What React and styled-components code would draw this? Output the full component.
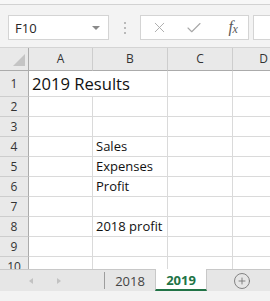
import React from "react";
import styled, { createGlobalStyle } from "styled-components";
import { X, Check, CirclePlus } from "lucide-react";

const GlobalStyle = createGlobalStyle`
  html, body {
    margin: 0;
    padding: 0;
    background: #f3f3f3;
  }
  * {
    box-sizing: border-box;
  }
`;

const Window = styled.div`
  width: 270px;
  height: 301px;
  overflow: hidden;
  display: flex;
  flex-direction: column;
  background: #f3f3f3;
  font-family: "Open Sans", "Liberation Sans", sans-serif;
  color: #222;
`;

const TopEdge = styled.div`
  height: 5px;
  flex: none;
  background: #f7f7f7;
  border-bottom: 1px solid #d2d2d2;
`;

const FormulaBar = styled.div`
  height: 42px;
  flex: none;
  display: flex;
  align-items: flex-start;
  padding: 10px 0 0 8px;
`;

const NameBox = styled.div`
  width: 101px;
  height: 25px;
  background: #fff;
  border: 1px solid #d4d4d4;
  display: flex;
  align-items: center;
  justify-content: space-between;
  padding: 0 8px 0 6px;
  font-size: 13px;
  color: #262626;
`;

const Caret = styled.span`
  width: 0;
  height: 0;
  border-left: 4px solid transparent;
  border-right: 4px solid transparent;
  border-top: 4px solid #8a8a8a;
`;

const Grip = styled.div`
  width: 31px;
  height: 25px;
  display: flex;
  flex-direction: column;
  align-items: center;
  justify-content: center;
  gap: 3px;

  span {
    width: 2px;
    height: 2px;
    background: #b9b9b9;
  }
`;

const FuncBox = styled.div`
  width: 109px;
  height: 25px;
  background: #fff;
  border: 1px solid #d4d4d4;
  display: flex;
  align-items: center;
  padding-left: 10px;
  color: #a8a8a8;
`;

const FuncButton = styled.span`
  display: flex;
  align-items: center;
  justify-content: center;
  width: ${(p) => p.$w}px;
`;

const FxLabel = styled.span`
  font-family: "Liberation Serif", "DejaVu Serif", serif;
  font-style: italic;
  font-size: 16px;
  color: #5a5a5a;
  letter-spacing: -0.5px;

  sub {
    font-size: 12px;
    vertical-align: -1px;
  }
`;

const FormulaInput = styled.div`
  flex: 1;
  height: 25px;
  margin-left: 4px;
  background: #fff;
  border: 1px solid #d4d4d4;
  border-right: none;
`;

const Sheet = styled.div`
  height: 222px;
  flex: none;
  overflow: hidden;
  background: #fff;
  border-top: 1px solid #d4d4d4;
  display: grid;
  grid-template-columns: 29px 64px 75px 65px 62px;
  grid-template-rows: 23px 26px repeat(9, 20px);
`;

const Corner = styled.div`
  background: #e9e9e9;
  border-right: 1px solid #ababab;
  border-bottom: 1px solid #ababab;
  display: flex;
  align-items: flex-end;
  justify-content: flex-end;
  padding: 0 3px 4px 0;

  span {
    width: 0;
    height: 0;
    border-left: 12px solid transparent;
    border-bottom: 12px solid #c4c4c4;
  }
`;

const ColHead = styled.div`
  background: #e9e9e9;
  border-right: 1px solid #cdcdcd;
  border-bottom: 1px solid #ababab;
  text-align: center;
  font-size: 12px;
  line-height: 22px;
  color: #333;
`;

const RowHead = styled.div`
  background: #e9e9e9;
  border-right: 1px solid #ababab;
  border-bottom: 1px solid #cdcdcd;
  text-align: center;
  font-size: 12px;
  line-height: ${(p) => (p.$tall ? 25 : 19)}px;
  color: #333;
`;

const Cell = styled.div`
  border-right: ${(p) => (p.$flow ? "none" : "1px solid #dadada")};
  border-bottom: 1px solid #dadada;
  padding-left: 3px;
  white-space: nowrap;
  overflow: visible;
  position: relative;
  z-index: ${(p) => (p.$text ? 1 : 0)};
  font-size: ${(p) => (p.$big ? 16.6 : 13)}px;
  line-height: ${(p) => (p.$tall ? 25 : 19)}px;
  color: #111;
`;

const TabBar = styled.div`
  height: 22px;
  flex: none;
  display: flex;
  align-items: stretch;
  background: #e6e6e6;
  border-top: 1px solid #c8c8c8;
`;

const NavArea = styled.div`
  width: 104px;
  display: flex;
  align-items: center;
  padding-left: 29px;
  gap: 24px;
`;

const NavArrow = styled.span`
  width: 0;
  height: 0;
  border-top: 3px solid transparent;
  border-bottom: 3px solid transparent;
  ${(p) =>
    p.$dir === "left"
      ? "border-right: 4px solid #c2c2c2;"
      : "border-left: 4px solid #c2c2c2;"}
`;

const Divider = styled.div`
  width: 1px;
  margin: 2px 0 2px;
  background: #9d9d9d;
`;

const Tab = styled.div`
  width: ${(p) => (p.$active ? 52 : 50)}px;
  display: flex;
  align-items: center;
  justify-content: center;
  font-size: 13px;
  color: ${(p) => (p.$active ? "#217346" : "#444")};
  font-weight: ${(p) => (p.$active ? 700 : 400)};
  background: ${(p) => (p.$active ? "#fff" : "transparent")};
  border-left: ${(p) => (p.$active ? "1px solid #c8c8c8" : "none")};
  border-right: ${(p) => (p.$active ? "1px solid #c8c8c8" : "none")};
  border-bottom: ${(p) => (p.$active ? "2px solid #217346" : "none")};
  margin-top: ${(p) => (p.$active ? -1 : 0)}px;
  padding-top: ${(p) => (p.$active ? 1 : 0)}px;
`;

const Spacer = styled.div`
  flex: 1;
`;

const AddButton = styled.div`
  display: flex;
  align-items: center;
  margin-right: 19px;
  color: #777;
`;

const BottomStrip = styled.div`
  flex: 1;
  background: #f3f3f3;
`;

const columns = ["A", "B", "C", "D"];

const rows = [
  { n: 1, tall: true, cells: { A: "2019 Results" }, big: true },
  { n: 2, cells: {} },
  { n: 3, cells: {} },
  { n: 4, cells: { B: "Sales" } },
  { n: 5, cells: { B: "Expenses" } },
  { n: 6, cells: { B: "Profit" } },
  { n: 7, cells: {} },
  { n: 8, cells: { B: "2018 profit" } },
  { n: 9, cells: {} },
  { n: 10, cells: {} },
];

const App = () => {
  return (
    <Window>
      <GlobalStyle />
      <TopEdge />
      <FormulaBar>
        <NameBox>
          F10
          <Caret />
        </NameBox>
        <Grip>
          <span />
          <span />
          <span />
        </Grip>
        <FuncBox>
          <FuncButton $w={17}>
            <X size={17} strokeWidth={1.3} />
          </FuncButton>
          <FuncButton $w={52}>
            <Check size={18} strokeWidth={1.5} />
          </FuncButton>
          <FuncButton $w={26}>
            <FxLabel>
              f<sub>x</sub>
            </FxLabel>
          </FuncButton>
        </FuncBox>
        <FormulaInput />
      </FormulaBar>
      <Sheet>
        <Corner>
          <span />
        </Corner>
        {columns.map((c) => (
          <ColHead key={c}>{c}</ColHead>
        ))}
        {rows.map((r) => (
          <React.Fragment key={r.n}>
            <RowHead $tall={r.tall}>{r.n}</RowHead>
            {columns.map((c, i) => {
              const text = r.cells[c];
              const flow = text && r.big && i === 0;
              return (
                <Cell
                  key={c}
                  $tall={r.tall}
                  $big={r.big}
                  $text={!!text}
                  $flow={flow}
                >
                  {text}
                </Cell>
              );
            })}
          </React.Fragment>
        ))}
      </Sheet>
      <TabBar>
        <NavArea>
          <NavArrow $dir="left" />
          <NavArrow $dir="right" />
        </NavArea>
        <Divider />
        <Tab>2018</Tab>
        <Tab $active>2019</Tab>
        <Spacer />
        <AddButton>
          <CirclePlus size={18} strokeWidth={1.2} />
        </AddButton>
      </TabBar>
      <BottomStrip />
    </Window>
  );
};

export default App;
